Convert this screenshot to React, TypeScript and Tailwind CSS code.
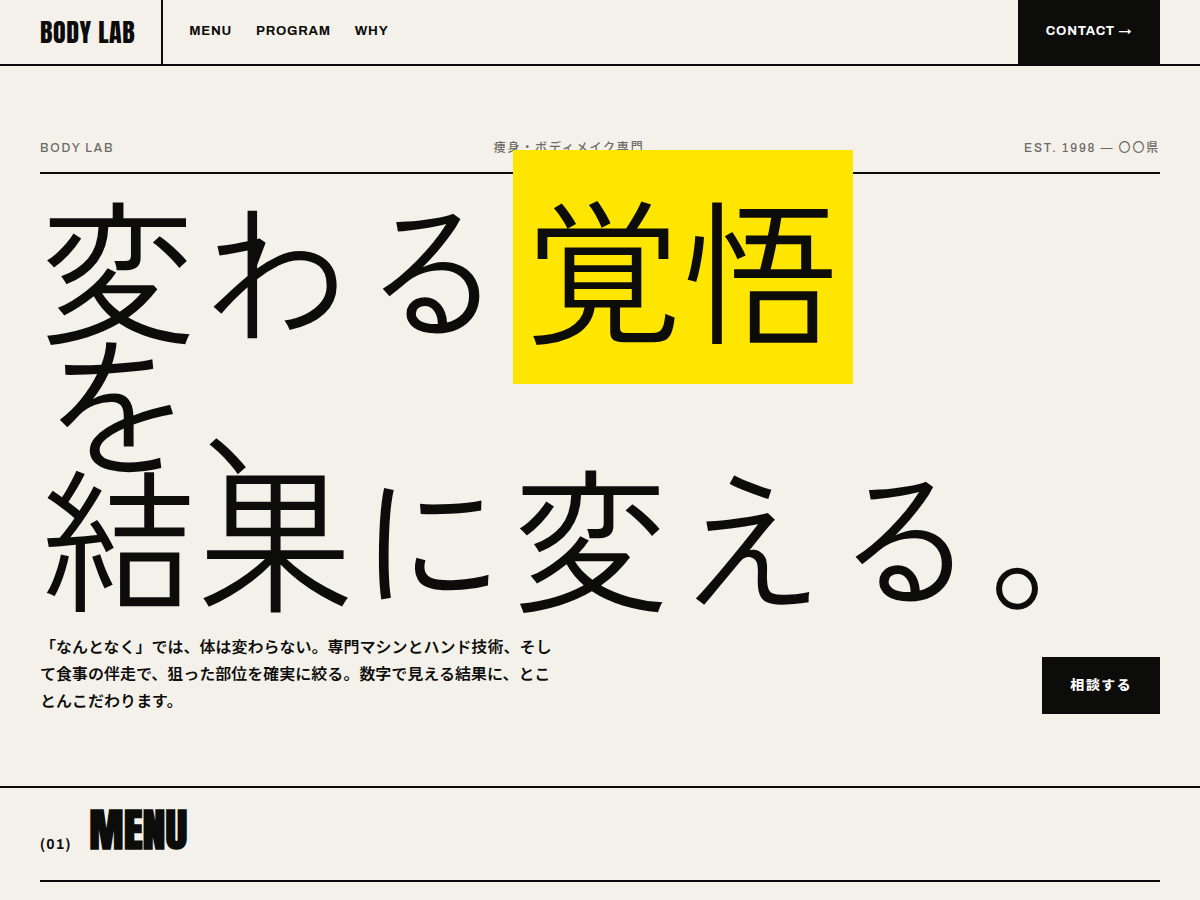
import React from 'react';

const navItems = [
    { label: 'MENU', href: '#menu' },
    { label: 'PROGRAM', href: '#program' },
    { label: 'WHY', href: '#why' },
];

const Header: React.FC = () => {
    return (
        <header className="flex items-stretch h-[66px] px-10 border-b-2 border-[#0c0c0a]">
            <a
                href="#top"
                className="flex items-center pr-[26px] border-r-2 border-[#0c0c0a] font-['Anton',sans-serif] text-[26px] tracking-[0.02em] whitespace-nowrap"
            >
                BODY LAB
            </a>
            <nav className="flex items-center gap-6 pl-[26px] text-[13px] font-bold tracking-[0.06em]">
                {navItems.map((item) => (
                    <a key={item.label} href={item.href} className="hover:underline">
                        {item.label}
                    </a>
                ))}
            </nav>
            <a
                href="#contact"
                className="flex items-center ml-auto px-7 bg-[#0c0c0a] text-white text-[13px] font-bold tracking-[0.06em] whitespace-nowrap"
            >
                CONTACT →
            </a>
        </header>
    );
};

const Hero: React.FC = () => {
    return (
        <section id="top" className="px-10 py-[72px] border-b-2 border-[#0c0c0a]">
            <div className="flex justify-between pb-[14px] border-b-2 border-[#0c0c0a] text-[12px] leading-5 font-medium tracking-[0.15em] text-[#6b6a66]">
                <span>BODY LAB</span>
                <span>痩身・ボディメイク専門</span>
                <span>EST. 1998 — 〇〇県</span>
            </div>
            <h1 className="mt-[26px] font-['Anton','Hiragino_Sans','IPAexGothic','Zen_Kaku_Gothic_New','Noto_Sans_CJK_JP',sans-serif] text-[13vw] leading-[0.86] font-normal tracking-[0.01em]">
                変わる<span className="bg-[#ffe600] px-[0.08em]">覚悟</span>を、
                <br />
                結果に変える。
            </h1>
            <div className="flex items-end justify-between gap-10 mt-[31px]">
                <p className="max-w-[520px] font-['Noto_Sans_JP','Noto_Sans_CJK_JP',sans-serif] text-base leading-[27px] font-semibold">
                    「なんとなく」では、体は変わらない。専門マシンとハンド技術、そして食事の伴走で、狙った部位を確実に絞る。数字で見える結果に、とことんこだわります。
                </p>
                <a
                    href="#contact"
                    className="shrink-0 px-7 pt-[17px] pb-[19px] bg-[#0c0c0a] font-['Noto_Sans_JP','Noto_Sans_CJK_JP',sans-serif] text-white text-sm leading-[21px] font-extrabold tracking-[0.1em]"
                >
                    相談する
                </a>
            </div>
        </section>
    );
};

const Menu: React.FC = () => {
    return (
        <section id="menu" className="px-10">
            <div className="flex items-end gap-[18px] pt-3 pb-5 border-b-2 border-[#0c0c0a]">
                <span className="pb-[5px] text-sm font-bold tracking-[0.08em]">(01)</span>
                <h2 className="font-['Anton',sans-serif] text-[46px] leading-[60px] font-bold">
                    MENU
                </h2>
            </div>
        </section>
    );
};

const App: React.FC = () => {
    return (
        <div lang="ja" className="min-h-screen bg-[#f4f1ea] text-[#0c0c0a] font-['Archivo','Space_Grotesk','Noto_Sans_CJK_JP',sans-serif]">
            <Header />
            <main>
                <Hero />
                <Menu />
            </main>
        </div>
    );
};

export default App;
